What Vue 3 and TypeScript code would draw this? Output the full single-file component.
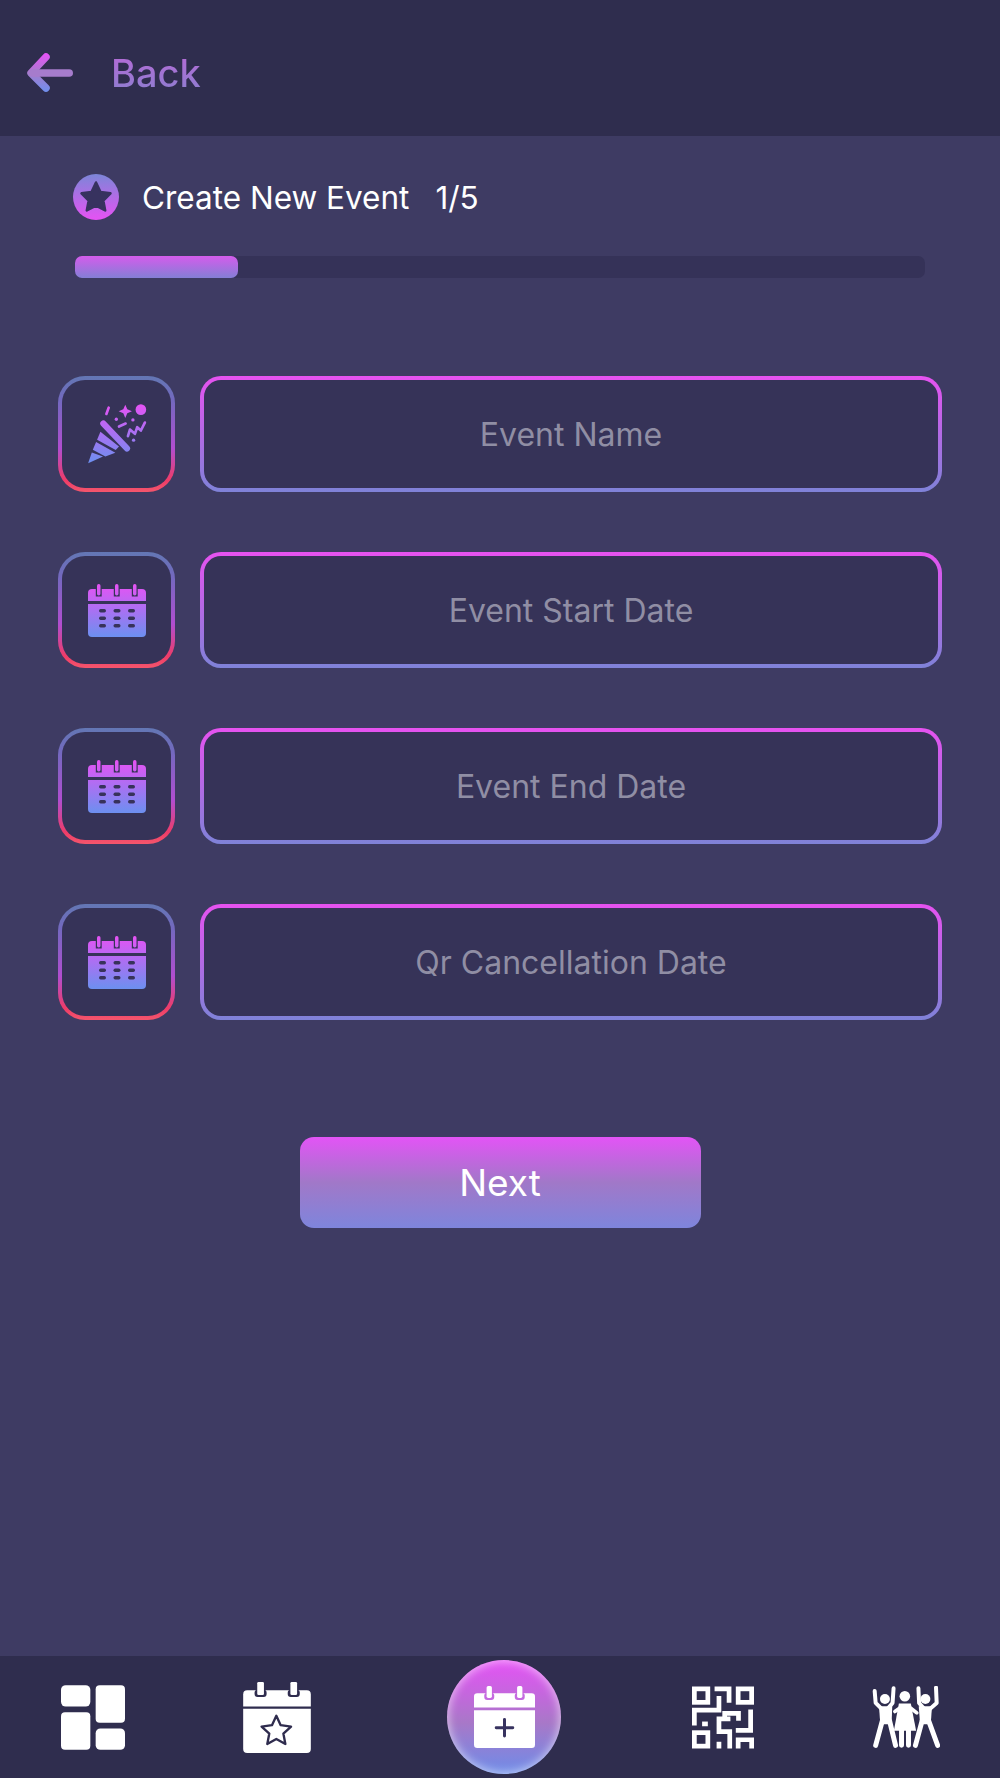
<script setup lang="ts">
import { ref } from 'vue'

interface EventField {
  key: string
  label: string
  icon: 'party' | 'calendar'
}

const fields: EventField[] = [
  { key: 'name', label: 'Event Name', icon: 'party' },
  { key: 'start', label: 'Event Start Date', icon: 'calendar' },
  { key: 'end', label: 'Event End Date', icon: 'calendar' },
  { key: 'qr', label: 'Qr Cancellation Date', icon: 'calendar' }
]

const values = ref<Record<string, string>>({ name: '', start: '', end: '', qr: '' })
const step = 1
const totalSteps = 5

const calendarHoles = [25, 32.5, 40].flatMap((y) => [11, 25.5, 40].map((x) => ({ x, y })))
const calendarTabs = [9, 27, 45]
</script>

<template>
  <div class="page">
    <header class="topbar">
      <svg class="back-arrow" viewBox="0 0 48 40" width="48" height="40">
        <defs>
          <linearGradient id="arrow-grad" gradientUnits="userSpaceOnUse" x1="0" y1="0" x2="0" y2="40">
            <stop offset="0" stop-color="#e850f8" />
            <stop offset="0.5" stop-color="#a67ccc" />
            <stop offset="1" stop-color="#6c90f0" />
          </linearGradient>
        </defs>
        <path d="M20 4 L5 20 L20 35" fill="none" stroke="url(#arrow-grad)" stroke-width="7.5" stroke-linecap="round" stroke-linejoin="round" />
        <rect x="3" y="16.2" width="44" height="7.6" rx="3.8" fill="#a67ccc" />
      </svg>
      <span class="back-label">Back</span>
    </header>

    <main class="content">
      <div class="title-row">
        <svg viewBox="0 0 46 46" width="46" height="46">
          <defs>
            <linearGradient id="star-grad" x1="0" y1="0" x2="0" y2="1">
              <stop offset="0" stop-color="#7c86d8" />
              <stop offset="1" stop-color="#e652f4" />
            </linearGradient>
          </defs>
          <circle cx="23" cy="23" r="23" fill="url(#star-grad)" />
          <path d="M23 8.5 L27.5 18 L37.5 19.3 L30.3 26.5 L32.2 36.5 L23 31.6 L13.8 36.5 L15.7 26.5 L8.5 19.3 L18.5 18 Z" fill="#37325f" stroke="#37325f" stroke-width="2.5" stroke-linejoin="round" />
        </svg>
        <span class="title-text">Create New Event</span>
        <span class="title-step">{{ step }}/{{ totalSteps }}</span>
      </div>

      <div class="progress">
        <div class="progress-fill" :style="{ width: (step / totalSteps) * 100 * 0.96 + '%' }"></div>
      </div>

      <form class="fields" @submit.prevent>
        <div v-for="(field, i) in fields" :key="field.key" class="field-row">
          <div class="icon-box">
            <svg v-if="field.icon === 'party'" viewBox="140 130 180 190" width="60" height="63">
              <defs>
                <linearGradient id="party-grad" gradientUnits="userSpaceOnUse" x1="0" y1="135" x2="0" y2="315">
                  <stop offset="0" stop-color="#e652f4" />
                  <stop offset="1" stop-color="#6c90f0" />
                </linearGradient>
              </defs>
              <g fill="url(#party-grad)">
                <path d="M143 315 L154 282 L188 294 Z" />
                <path d="M157 274 L167 251 L225 283 L195 294 Z" />
                <path d="M170 244 L180 220 L236 264 L226 275 Z" />
                <path d="M255 138 L261 152 L275 158 L261 164 L255 178 L249 164 L235 158 L249 152 Z" />
                <circle cx="302" cy="153" r="16" />
                <circle cx="228" cy="182" r="5" />
                <circle cx="278" cy="184" r="5" />
                <circle cx="280" cy="245" r="5" />
              </g>
              <g fill="none" stroke="url(#party-grad)" stroke-linecap="round" stroke-linejoin="round">
                <path d="M189 195 L260 270" stroke-width="19" />
                <path d="M198 166 L205 147" stroke-width="8" />
                <path d="M236 204 L256 195" stroke-width="8" />
                <path d="M263 233 L269 213 L284 226 L291 206 L302 216 L314 192" stroke-width="8" />
              </g>
            </svg>
            <svg v-else class="calendar-icon" viewBox="0 0 58 54" width="58" height="54">
              <defs>
                <linearGradient :id="'cal-grad-' + i" gradientUnits="userSpaceOnUse" x1="0" y1="0" x2="0" y2="53">
                  <stop offset="0" stop-color="#e652f4" />
                  <stop offset="1" stop-color="#6c90f0" />
                </linearGradient>
              </defs>
              <path :fill="'url(#cal-grad-' + i + ')'" d="M4 5 H54 a4 4 0 0 1 4 4 V17 H0 V9 a4 4 0 0 1 4 -4 Z" />
              <template v-for="t in calendarTabs" :key="t">
                <rect :x="t - 1.2" y="5" width="5.9" height="7.5" fill="#363358" />
                <rect :x="t" y="0" width="3.5" height="11.5" rx="1.7" :fill="'url(#cal-grad-' + i + ')'" />
              </template>
              <path :fill="'url(#cal-grad-' + i + ')'" d="M0 20 H58 V49 a4 4 0 0 1 -4 4 H4 a4 4 0 0 1 -4 -4 Z" />
              <rect v-for="h in calendarHoles" :key="h.x + '-' + h.y" :x="h.x" :y="h.y" width="7" height="3.4" rx="1.7" fill="#37325a" />
            </svg>
          </div>
          <div class="input-wrap">
            <input v-model="values[field.key]" class="field-input" type="text" :placeholder="field.label" />
          </div>
        </div>
      </form>

      <button class="next-btn" type="button">Next</button>
    </main>

    <nav class="tabbar">
      <svg class="tab tab-home" viewBox="182 135 192 194" width="64" height="65">
        <g fill="#fff">
          <rect x="182" y="135" width="88" height="64" rx="14" />
          <rect x="286" y="135" width="88" height="113" rx="12" />
          <rect x="182" y="216" width="88" height="113" rx="12" />
          <rect x="286" y="265" width="88" height="64" rx="14" />
        </g>
      </svg>

      <svg class="tab tab-events" viewBox="730 125 202 212" width="68" height="71">
        <g fill="#fff">
          <path d="M742 150 H920 a12 12 0 0 1 12 12 V198 H730 V162 a12 12 0 0 1 12 -12 Z" />
          <path d="M730 205 H932 V325 a12 12 0 0 1 -12 12 H742 a12 12 0 0 1 -12 -12 Z" />
        </g>
        <rect x="764" y="148" width="36" height="22" rx="9" fill="#2f2c4e" />
        <rect x="863" y="148" width="36" height="22" rx="9" fill="#2f2c4e" />
        <rect x="772" y="125" width="20" height="39" rx="4" fill="#fff" />
        <rect x="871" y="125" width="20" height="39" rx="4" fill="#fff" />
        <path d="M829 226 L842 254 L873 258 L850 279 L856 310 L829 295 L802 310 L808 279 L785 258 L816 254 Z" fill="none" stroke="#2f2c4e" stroke-width="7" stroke-linejoin="round" />
      </svg>

      <button class="tab tab-create" type="button">
        <svg viewBox="97 105 184 187" width="61" height="62">
          <g fill="#fff">
            <path d="M107 127 H271 a10 10 0 0 1 10 10 V170 H97 V137 a10 10 0 0 1 10 -10 Z" />
            <path d="M97 178 H281 V282 a10 10 0 0 1 -10 10 H107 a10 10 0 0 1 -10 -10 Z" />
          </g>
          <rect x="128" y="125" width="30" height="22" rx="9" fill="#c56ae0" />
          <rect x="220" y="125" width="30" height="22" rx="9" fill="#c56ae0" />
          <rect x="135" y="105" width="16" height="36" rx="5" fill="#fff" />
          <rect x="227" y="105" width="16" height="36" rx="5" fill="#fff" />
          <path d="M189 206 V256 M164 231 H214" stroke="#37325f" stroke-width="9" stroke-linecap="round" />
        </svg>
      </button>

      <svg class="tab tab-qr" viewBox="38 30 184 184" width="62" height="63">
        <g fill="none" stroke="#fff" stroke-width="14">
          <rect x="45" y="37" width="40" height="40" />
          <rect x="175" y="37" width="40" height="40" />
          <rect x="45" y="167" width="40" height="40" />
          <path d="M105 37 H148 V78" />
          <path d="M118 58 V100 H45 V146" />
          <path d="M135 132 V110 H176 V132" />
          <path d="M118 126 H152 M118 119 V164 H150 V214" />
          <path d="M212 98 V160 H168" />
          <path d="M175 214 V188 H215 V214" />
          <path d="M118 214 V194" />
        </g>
        <rect x="68" y="134" width="17" height="14" fill="#fff" />
      </svg>

      <svg class="tab tab-people" viewBox="29 25 205 187" width="68" height="62">
        <g fill="none" stroke="#fff" stroke-linecap="round" stroke-linejoin="round">
          <path d="M37 40 L40 76 L58 94 M94 32 L91 76 L76 94" stroke-width="12" />
          <path d="M60 130 L40 204 M82 130 L100 204" stroke-width="15" />
          <path d="M169 32 L171 76 L186 94 M222 30 L224 76 L204 94" stroke-width="12" />
          <path d="M180 130 L160 204 M200 130 L227 204" stroke-width="15" />
          <path d="M118 155 V204 M139 155 V204" stroke-width="15" />
          <path d="M98 102 L112 92 M146 92 L164 106" stroke-width="11" />
        </g>
        <g fill="#fff">
          <circle cx="68" cy="64" r="15" />
          <circle cx="128" cy="56" r="16" />
          <circle cx="190" cy="64" r="15" />
          <path d="M50 86 H90 L88 140 H54 Z" />
          <path d="M170 86 H210 L206 140 H174 Z" />
          <path d="M110 78 H146 L162 160 H95 Z" />
        </g>
      </svg>
    </nav>
  </div>
</template>

<style>
html,
body {
  margin: 0;
  background: #3e3b63;
}
</style>

<style scoped>
.page {
  display: flex;
  flex-direction: column;
  height: 1778px;
  font-family: Inter, "Liberation Sans", sans-serif;
  background: #3e3b63;
}

.topbar {
  display: flex;
  align-items: center;
  gap: 37px;
  flex: none;
  height: 136px;
  padding: 9px 0 0 26px;
  box-sizing: border-box;
  background: #2f2d4e;
}

.back-label {
  font-size: 38px;
  font-weight: 500;
  line-height: 1;
  color: transparent;
  background: linear-gradient(180deg, #b56ad6 0%, #8e7dd0 100%);
  -webkit-background-clip: text;
  background-clip: text;
}

.content {
  flex: 1;
  display: flex;
  flex-direction: column;
  padding: 37px 58px 0;
}

.title-row {
  display: flex;
  align-items: center;
  height: 47px;
  padding-left: 15px;
  color: #fff;
  font-size: 31.5px;
}

.title-text {
  margin: 2px 0 0 23px;
}

.title-step {
  margin: 2px 0 0 26px;
}

.progress {
  height: 22px;
  margin: 36px 17px 0;
  border-radius: 7px;
  background: #353258;
}

.progress-fill {
  height: 100%;
  border-radius: 7px;
  background: linear-gradient(180deg, #d45cec 0%, #847fd6 100%);
}

.fields {
  display: flex;
  flex-direction: column;
  gap: 60px;
  margin-top: 97.5px;
}

.field-row {
  display: flex;
  gap: 25px;
  height: 116px;
}

.icon-box {
  flex: none;
  display: flex;
  align-items: center;
  justify-content: center;
  width: 117px;
  box-sizing: border-box;
  border: 4px solid transparent;
  border-radius: 27px;
  background:
    linear-gradient(#363358, #363358) padding-box,
    linear-gradient(180deg, #6377b4 0%, #7468bf 22%, #b04ed0 62%, #ee3c68 90%, #f4566c 100%) border-box;
}

.calendar-icon {
  margin-top: 2px;
}

.input-wrap {
  flex: 1;
  display: flex;
  box-sizing: border-box;
  border: 4px solid transparent;
  border-radius: 21px;
  background:
    linear-gradient(#363358, #363358) padding-box,
    linear-gradient(180deg, #e652f0 0%, #7f82d8 100%) border-box;
}

.field-input {
  flex: 1;
  min-width: 0;
  border: 0;
  outline: 0;
  padding: 2px 0 0;
  background: transparent;
  font-family: inherit;
  font-size: 32px;
  text-align: center;
  color: #fff;
}

.field-input::placeholder {
  color: #908ea4;
  opacity: 1;
}

.next-btn {
  align-self: center;
  width: 401px;
  height: 91px;
  margin-top: 117px;
  border: 0;
  border-radius: 14px;
  background: linear-gradient(180deg, #e354f6 0%, #a178c8 50%, #7e85dc 100%);
  color: #fff;
  font-family: inherit;
  font-size: 37px;
  cursor: pointer;
}

.tabbar {
  display: flex;
  align-items: center;
  flex: none;
  height: 122px;
  padding-left: 61px;
  box-sizing: border-box;
  background: #2f2d4e;
}

.tab {
  flex: none;
}

.tab-events {
  margin-left: 118px;
}

.tab-create {
  display: flex;
  align-items: center;
  justify-content: center;
  width: 114px;
  height: 114px;
  margin-left: 136px;
  padding: 0;
  border: 0;
  border-radius: 50%;
  background: linear-gradient(180deg, #e652f6 0%, #a878c8 55%, #6e8ce8 100%);
  box-shadow: inset 0 0 8px 2px rgba(255, 255, 255, 0.5);
}

.tab-qr {
  margin-left: 131px;
}

.tab-people {
  margin-left: 118px;
}
</style>
